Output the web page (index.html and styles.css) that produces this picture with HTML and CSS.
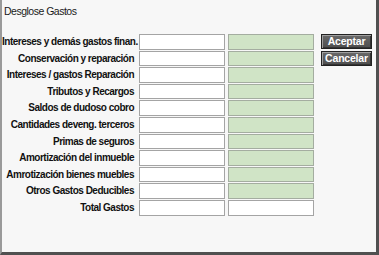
FILE: index.html
```html
<!DOCTYPE html>
<html>
<head>
<meta charset="utf-8">
<link rel="stylesheet" href="styles.css">
</head>
<body>
<div class="window">
  <div class="title">Desglose Gastos</div>
  <div class="main">
    <div class="form">
      <div class="label">Intereses y demás gastos finan.</div><div class="box"></div><div class="box green"></div>
      <div class="label">Conservación y reparación</div><div class="box"></div><div class="box green"></div>
      <div class="label">Intereses / gastos Reparación</div><div class="box"></div><div class="box green"></div>
      <div class="label">Tributos y Recargos</div><div class="box"></div><div class="box green"></div>
      <div class="label">Saldos de dudoso cobro</div><div class="box"></div><div class="box green"></div>
      <div class="label">Cantidades deveng. terceros</div><div class="box"></div><div class="box green"></div>
      <div class="label">Primas de seguros</div><div class="box"></div><div class="box green"></div>
      <div class="label">Amortización del inmueble</div><div class="box"></div><div class="box green"></div>
      <div class="label">Amrotización bienes muebles</div><div class="box"></div><div class="box green"></div>
      <div class="label">Otros Gastos Deducibles</div><div class="box"></div><div class="box green"></div>
      <div class="label">Total Gastos</div><div class="box"></div><div class="box"></div>
    </div>
    <div class="buttons">
      <div class="btn">Aceptar</div>
      <div class="btn">Cancelar</div>
    </div>
  </div>
</div>
</body>
</html>
```
FILE: styles.css
```css
html, body {
  margin: 0;
  padding: 0;
  background: #f7f7f7;
}
.window {
  box-sizing: border-box;
  width: 379px;
  height: 255px;
  background: #f7f7f7;
  border-left: 2px solid #9a9a9a;
  border-right: 3px solid #505050;
  border-bottom: 3px solid #505050;
  font-family: "Liberation Sans", Arial, sans-serif;
  color: #111;
}
.title {
  height: 34px;
  box-sizing: border-box;
  padding: 4px 0 0 2px;
  font-size: 10.5px;
  letter-spacing: -0.5px;
  line-height: 14px;
  color: #1a1a1a;
}
.main {
  display: flex;
  align-items: flex-start;
}
.form {
  display: grid;
  grid-template-columns: 134px 86px 86px;
  grid-template-rows: repeat(11, 15.6px);
  column-gap: 3px;
  row-gap: 1px;
}
.label {
  font-size: 10px;
  font-weight: bold;
  letter-spacing: -0.5px;
  text-align: right;
  line-height: 16px;
  white-space: nowrap;
  padding-right: 2px;
}
.box {
  background: #ffffff;
  border: 1px solid #a4a4a4;
}
.box.green {
  background: #d0e4c6;
  border-color: #a4ada0;
}
.buttons {
  display: flex;
  flex-direction: column;
  gap: 2px;
  margin-left: 7px;
}
.btn {
  box-sizing: border-box;
  width: 51px;
  height: 15px;
  background: linear-gradient(#6a6a6a, #4e4e4e);
  border: 1px solid #222;
  box-shadow: inset 1px 1px 0 #a0a0a0, inset -1px -1px 0 #333;
  color: #fff;
  font-size: 10.5px;
  font-weight: bold;
  letter-spacing: -0.2px;
  text-align: center;
  line-height: 13px;
}
```
